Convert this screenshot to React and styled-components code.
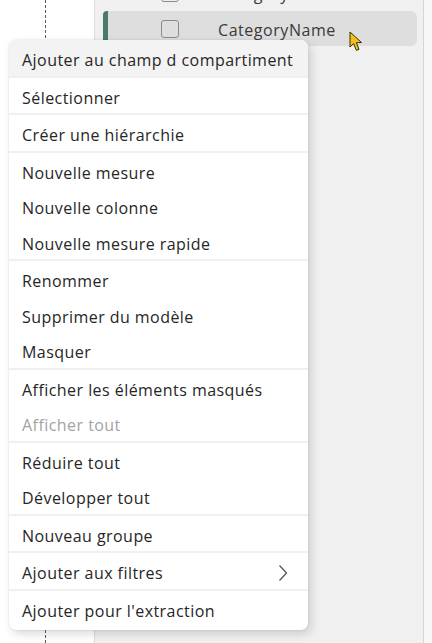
import React from "react"
import styled, { createGlobalStyle } from "styled-components"

const GlobalStyle = createGlobalStyle`
	html, body {
		margin: 0;
		padding: 0;
		background: #ffffff;
		font-family: "Open Sans", "Noto Sans", sans-serif;
		overflow: hidden;
	}
`

const menuGroups = [
	[{ label: "Ajouter au champ d compartiment", active: true }],
	[{ label: "Sélectionner" }],
	[{ label: "Créer une hiérarchie" }],
	[
		{ label: "Nouvelle mesure" },
		{ label: "Nouvelle colonne" },
		{ label: "Nouvelle mesure rapide" },
	],
	[{ label: "Renommer" }, { label: "Supprimer du modèle" }, { label: "Masquer" }],
	[{ label: "Afficher les éléments masqués" }, { label: "Afficher tout", disabled: true }],
	[{ label: "Réduire tout" }, { label: "Développer tout" }],
	[{ label: "Nouveau groupe" }],
	[{ label: "Ajouter aux filtres", submenu: true }],
	[{ label: "Ajouter pour l'extraction" }],
]

function Chevron() {
	return (
		<svg width="10" height="18" viewBox="0 0 10 18" fill="none">
			<path d="M1.5 1.5 L8.5 9 L1.5 16.5" stroke="#555" strokeWidth="1.3" />
		</svg>
	)
}

function Cursor() {
	return (
		<svg width="16" height="22" viewBox="0 0 16 22">
			<path
				d="M1 1 L1 16 L4.6 12.6 L7.4 19.4 L10 18.3 L7.3 11.7 L12.5 11.5 Z"
				fill="#f2c21b"
				stroke="#3a2e00"
				strokeWidth="1"
				strokeLinejoin="round"
			/>
		</svg>
	)
}

export default function App() {
	return (
		<>
			<GlobalStyle />
			<Page>
				<LeftPane>
					<DashedColumn />
				</LeftPane>
				<FieldsPane>
					<FieldList>
						<FieldRow>
							<Checkbox />
							<FieldName>Category</FieldName>
						</FieldRow>
						<FieldRow selected>
							<Checkbox />
							<FieldName>CategoryName</FieldName>
							<CursorWrap>
								<Cursor />
							</CursorWrap>
						</FieldRow>
					</FieldList>
				</FieldsPane>
				<Gutter />

				<ContextMenu>
					{menuGroups.map((group, gi) => (
						<Group key={gi} first={gi === 0}>
							{group.map((item) => (
								<MenuItem key={item.label} active={item.active} disabled={item.disabled}>
									<span>{item.label}</span>
									{item.submenu && <Chevron />}
								</MenuItem>
							))}
						</Group>
					))}
				</ContextMenu>
			</Page>
		</>
	)
}

const Page = styled.div`
	position: relative;
	display: flex;
	width: 432px;
	height: 643px;
	overflow: hidden;
`

const LeftPane = styled.div`
	width: 94px;
	flex-shrink: 0;
	background: #ffffff;
	border-right: 1px solid #dcdcdc;
`

const DashedColumn = styled.div`
	width: 45px;
	height: 100%;
	border-right: 1px dashed #5a5a5a;
`

const FieldsPane = styled.div`
	flex: 1;
	background: #f0f0f0;
	border-right: 1px solid #d6d6d6;
	padding: 0 6px 0 8px;
`

const FieldList = styled.div`
	margin-top: -25px;
	display: flex;
	flex-direction: column;
`

const FieldRow = styled.div`
	position: relative;
	display: flex;
	align-items: center;
	height: 35px;
	margin-top: ${(p) => (p.selected ? "1px" : "0")};
	border-radius: 6px;
	background: ${(p) => (p.selected ? "#dedede" : "transparent")};
	border-left: 5px solid ${(p) => (p.selected ? "#4a7a68" : "transparent")};
	border-top-left-radius: ${(p) => (p.selected ? "4px" : "6px")};
	border-bottom-left-radius: 0;
	padding-left: 53px;
`

const Checkbox = styled.div`
	width: 16px;
	height: 16px;
	border: 1px solid #8a8a8a;
	border-radius: 3px;
	background: transparent;
	flex-shrink: 0;
`

const FieldName = styled.span`
	margin-left: 39px;
	font-size: 16px;
	letter-spacing: 0.55px;
	color: #3a3a3a;
	padding-top: 3px;
`

const CursorWrap = styled.div`
	position: absolute;
	left: 241px;
	top: 20px;
	line-height: 0;
`

const Gutter = styled.div`
	width: 8px;
	flex-shrink: 0;
	background: #f7f7f7;
`

const ContextMenu = styled.div`
	position: absolute;
	left: 9px;
	top: 40px;
	width: 299px;
	padding-bottom: 4px;
	background: #ffffff;
	border-radius: 7px;
	box-shadow: 0 0 2px rgba(0, 0, 0, 0.12), 3px 4px 10px rgba(0, 0, 0, 0.15);
	overflow: hidden;
	display: flex;
	flex-direction: column;
`

const Group = styled.div`
	display: flex;
	flex-direction: column;
	border-top: ${(p) => (p.first ? "none" : "2px solid #f0f0f0")};
`

const MenuItem = styled.div`
	display: flex;
	align-items: center;
	justify-content: space-between;
	box-sizing: border-box;
	height: 35.5px;
	padding: 5px 20px 0 13px;
	font-size: 16px;
	letter-spacing: 0.45px;
	color: ${(p) => (p.disabled ? "#a3a3a3" : "#262626")};
	background: ${(p) => (p.active ? "#f3f3f3" : "transparent")};
	white-space: nowrap;
`
